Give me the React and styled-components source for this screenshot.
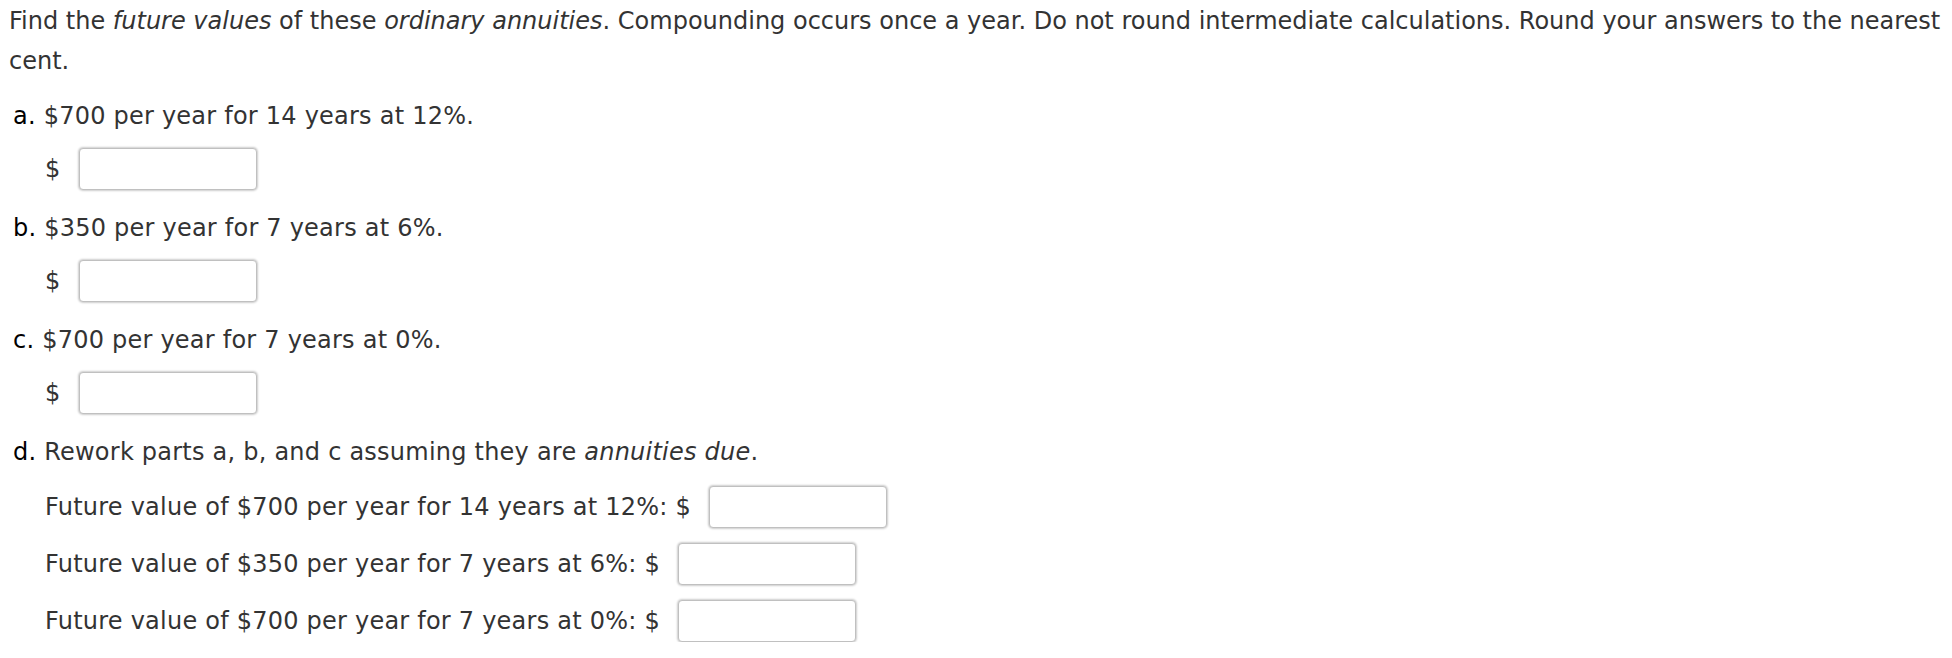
import React from 'react';
import styled, { createGlobalStyle } from 'styled-components';

const GlobalStyle = createGlobalStyle`
    html, body {
        margin: 0;
        padding: 0;
        background: #fff;
    }
    body {
        font-family: "DejaVu Sans", Verdana, sans-serif;
        font-size: 24px;
        color: #333;
    }
`;

const Page = styled.div`
    padding: 1px 0 0 9px;
`;

const Intro = styled.p`
    margin: 0;
    line-height: 40px;
`;

const Part = styled.div`
    margin-top: ${p => p.$first ? '18px' : '21px'};
    letter-spacing: 0.23px;
`;

const Question = styled.div`
    padding-left: 4px;
    line-height: 34px;
`;

const Letter = styled.span`
    color: #000;
`;

const AnswerRow = styled.div`
    display: flex;
    align-items: center;
    gap: 18px;
    padding-left: 36px;
    margin-top: ${p => p.$gap || '15px'};
`;

const AnswerBox = styled.input`
    width: 178px;
    height: 42px;
    box-sizing: border-box;
    border: 1px solid #c0c0c0;
    border-radius: 4px;
    box-shadow: 0 0 2px 1px rgba(0, 0, 0, 0.2);
    background: #fff;
    padding: 0 6px;
    font: inherit;
    outline: none;
`;

const Label = styled.span`
    white-space: nowrap;
`;

function Answer({ label, gap }) {
    return (
        <AnswerRow $gap={gap}>
            <Label>{label}</Label>
            <AnswerBox type="text" />
        </AnswerRow>
    );
}

const parts = [
    { letter: 'a', text: '$700 per year for 14 years at 12%.' },
    { letter: 'b', text: '$350 per year for 7 years at 6%.' },
    { letter: 'c', text: '$700 per year for 7 years at 0%.' },
];

const dueRows = [
    'Future value of $700 per year for 14 years at 12%: $',
    'Future value of $350 per year for 7 years at 6%: $',
    'Future value of $700 per year for 7 years at 0%: $',
];

export default function App() {
    return (
        <>
            <GlobalStyle />
            <Page>
                <Intro>
                    Find the <em>future values</em> of these <em>ordinary annuities</em>. Compounding occurs once a year. Do not round intermediate calculations. Round your answers to the nearest cent.
                </Intro>
                {parts.map((p, i) => (
                    <Part key={p.letter} $first={i === 0}>
                        <Question><Letter>{p.letter}.</Letter> {p.text}</Question>
                        <Answer label="$" />
                    </Part>
                ))}
                <Part>
                    <Question><Letter>d.</Letter> Rework parts a, b, and c assuming they are <em>annuities due</em>.</Question>
                    {dueRows.map((r, i) => (
                        <Answer key={i} label={r} gap={i === 0 ? '17px' : '15px'} />
                    ))}
                </Part>
            </Page>
        </>
    );
}
